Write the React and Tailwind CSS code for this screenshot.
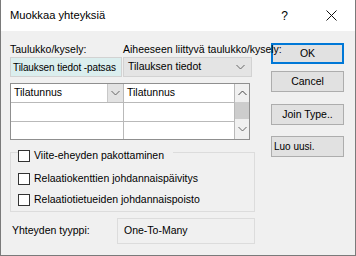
import React from 'react'

const Chevron = ({ up }) => (
  <svg width="9" height="6" viewBox="0 0 9 6" className="shrink-0">
    <polyline
      points={up ? "0.5,5 4.5,1 8.5,5" : "0.5,1 4.5,5 8.5,1"}
      fill="none"
      stroke={up ? "#444" : "#666"}
      strokeWidth="1"
    />
  </svg>
)

const Check = ({ label, className = '' }) => (
  <div className={`flex items-center gap-[4px] ${className}`}>
    <span className="w-[12px] h-[12px] border border-[#333] bg-white shrink-0"></span>
    <span className="text-[10.5px] leading-[13px] whitespace-nowrap">{label}</span>
  </div>
)

const App = () => {
  return (
    <main className="w-[356px] h-[256px] flex flex-col bg-[#f0f0f0] border-x border-b border-[#7a7a7a] text-black text-[10.5px] font-['Liberation_Sans',Arial,sans-serif] overflow-hidden">
      {/* title bar */}
      <div className="h-[31px] shrink-0 bg-white flex items-center">
        <span className="ml-[9px] text-[11.2px]">Muokkaa yhteyksiä</span>
        <span className="ml-auto text-[12px] mr-[38px]">?</span>
        <svg width="11" height="11" viewBox="0 0 11 11" className="mr-[18px]">
          <path d="M0.5 0.5 L10.5 10.5 M10.5 0.5 L0.5 10.5" stroke="#111" strokeWidth="1" />
        </svg>
      </div>

      <div className="flex flex-1 pt-[12px] pl-[9px]">
        <div className="w-[245px] shrink-0 flex flex-col">
          <div className="relative z-10 flex h-[14px] items-center">
            <span className="w-[113px] shrink-0">Taulukko/kysely:</span>
            <span className="shrink-0 whitespace-nowrap">Aiheeseen liittyvä taulukko/kysely:</span>
          </div>

          <div className="flex h-[20px]">
            <div className="w-[112px] shrink-0 border border-[#d2d2d2] bg-[#dbeeee] flex items-center pl-[2px] text-[10px] tracking-[-0.1px] whitespace-nowrap overflow-hidden">
              Tilauksen tiedot -patsas
            </div>
            <div className="ml-[1px] w-[129px] shrink-0 border border-[#d2d2d2] bg-[#e4e4e4] flex items-center pl-[4px] pr-[6px] whitespace-nowrap">
              <span>Tilauksen tiedot</span>
              <span className="ml-auto"><Chevron /></span>
            </div>
          </div>

          {/* grid */}
          <div className="mt-[6px] w-[240px] border border-[#8f8f8f] bg-white flex">
            <div className="flex-1 flex flex-col">
              <div className="h-[19px] flex border-b border-[#b9b9b9]">
                <div className="w-[112px] flex items-center">
                  <span className="pl-[3px] flex-1">Tilatunnus</span>
                  <span className="w-[16px] h-full bg-[#e3e3e3] border-l border-[#c8c8c8] flex items-center justify-center">
                    <Chevron />
                  </span>
                </div>
                <div className="flex-1 border-l border-[#b9b9b9] flex items-center pl-[3px]">Tilatunnus</div>
              </div>
              <div className="h-[19px] flex border-b border-[#b9b9b9]">
                <div className="w-[112px]"></div>
                <div className="flex-1 border-l border-[#b9b9b9]"></div>
              </div>
              <div className="h-[17px] flex">
                <div className="w-[112px]"></div>
                <div className="flex-1 border-l border-[#b9b9b9]"></div>
              </div>
            </div>
            <div className="w-[15px] bg-[#f0f0f0] border-l border-[#b9b9b9] flex flex-col">
              <div className="h-[18px] flex items-center justify-center"><Chevron up /></div>
              <div className="h-[17px] bg-[#cdcdcd]"></div>
              <div className="flex-1 flex items-center justify-center"><Chevron /></div>
            </div>
          </div>

          {/* check group */}
          <div className="mt-[12px] w-[245px] h-[60px] border border-[#dcdcdc] flex flex-col items-start">
            <div className="-mt-[4px] ml-[7px] bg-[#f0f0f0] pr-[9px]">
              <Check label="Viite-eheyden pakottaminen" />
            </div>
            <Check className="mt-[10px] ml-[7px]" label="Relaatiokenttien johdannaispäivitys" />
            <Check className="mt-[8px] ml-[7px]" label="Relaatiotietueiden johdannaispoisto" />
          </div>

          <div className="mt-[6px] flex items-center">
            <span className="w-[107px] shrink-0 pl-[2px]">Yhteyden tyyppi:</span>
            <div className="w-[138px] h-[26px] border border-[#dcdcdc] flex items-center pl-[6px]">
              One-To-Many
            </div>
          </div>
        </div>

        {/* buttons */}
        <div className="ml-[16px] w-[73px] shrink-0 flex flex-col">
          <button className="h-[21px] border-2 border-[#0078d7] bg-[#e1e1e1] text-[10.5px]">OK</button>
          <button className="mt-[7px] h-[21px] border border-[#adadad] bg-[#e1e1e1] text-[10.5px]">Cancel</button>
          <button className="mt-[12px] h-[21px] border border-[#adadad] bg-[#e1e1e1] text-[10.5px]">Join Type..</button>
          <button className="mt-[11px] h-[21px] border border-[#adadad] bg-[#e1e1e1] text-[10px] text-left pl-[2px]">Luo uusi.</button>
        </div>
      </div>
    </main>
  )
}

export default App
